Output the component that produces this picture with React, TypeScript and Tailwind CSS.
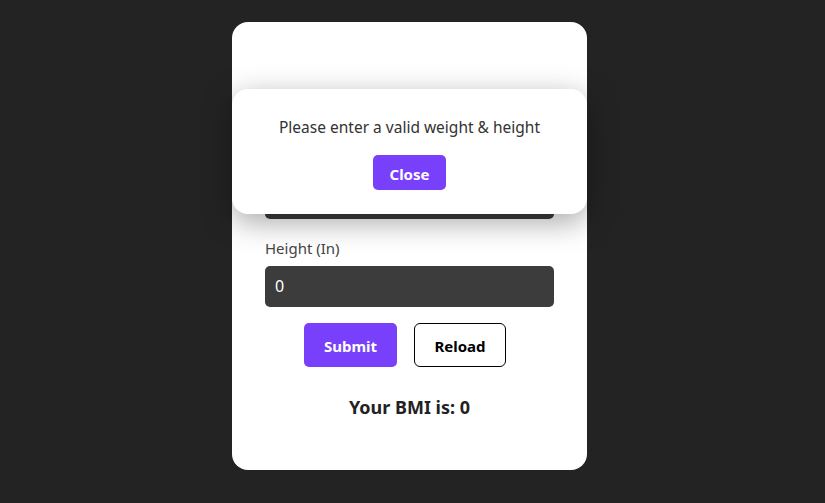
import React from "react";

export default function App() {
  return (
    <div
      className="min-h-[503px] w-full bg-[#232323] flex justify-center pr-[6px] pt-[22px]"
      style={{ fontFamily: '"Noto Sans", "Open Sans", sans-serif' }}
    >
      <div className="relative w-[355px] h-[448px] bg-white rounded-[16px]">
        <div className="px-[33px] pt-[126px] flex flex-col">
          <label className="h-[24px] leading-[24px] text-[15px] text-[#444]">Weight (lbs)</label>
          <div className="mt-[6px] h-[41px] rounded-[5px] bg-[#3c3c3c] text-white text-[16px] leading-[41px] px-[10px]">0</div>
          <label className="mt-[17px] h-[24px] leading-[24px] text-[15px] text-[#444]">Height (In)</label>
          <div className="mt-[6px] h-[41px] rounded-[5px] bg-[#3c3c3c] text-white text-[16px] leading-[41px] px-[10px]">0</div>
          <div className="mt-[16px] flex justify-center gap-[17px] pr-[9px]">
            <button className="w-[93px] h-[44px] pt-[3px] rounded-[5px] bg-[#7840fb] text-white font-bold text-[15px]">Submit</button>
            <button className="w-[92px] h-[44px] pt-[3px] rounded-[6px] border border-black bg-white text-black font-bold text-[15px]">Reload</button>
          </div>
          <div className="mt-[26px] h-[28px] leading-[28px] text-center text-[18px] font-bold text-[#222]">Your BMI is: 0</div>
        </div>
        <div className="absolute left-0 top-[67px] w-[355px] h-[125px] bg-white rounded-[16px] shadow-[0_8px_30px_rgba(0,0,0,0.35)] flex flex-col items-center pt-[26px]">
          <p className="h-[24px] leading-[24px] text-[15.5px] text-[#333]">Please enter a valid weight &amp; height</p>
          <button className="mt-[16px] w-[73px] h-[35px] pt-[3px] rounded-[5px] bg-[#7840fb] text-white font-bold text-[15px]">Close</button>
        </div>
      </div>
    </div>
  );
}
